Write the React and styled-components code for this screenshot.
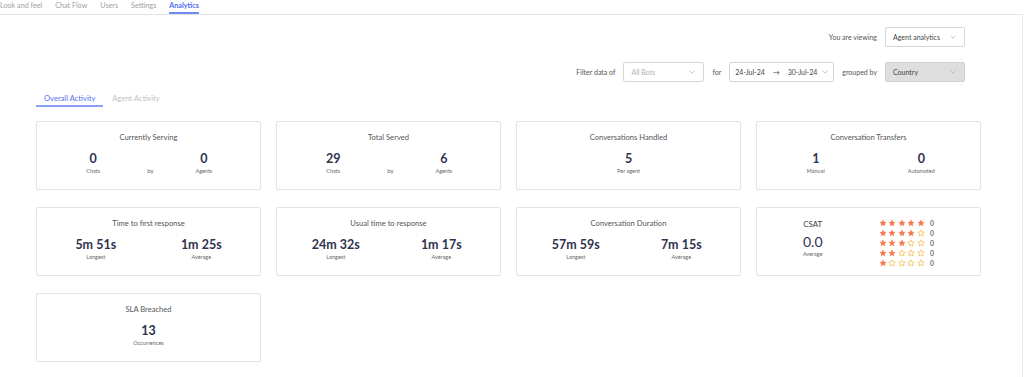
import React from 'react';
import styled, { createGlobalStyle } from 'styled-components';

const GlobalStyle = createGlobalStyle`
  body {
    margin: 0;
    background: #fff;
    font-family: Lato, "Open Sans", sans-serif;
    color: #444;
  }
`;

const Page = styled.div`
  width: 1024px;
  height: 377px;
  overflow: hidden;
`;

const TopTabs = styled.div`
  display: flex;
  gap: 13px;
  height: 14px;
  border-bottom: 1px solid #e3e3e3;
  margin-right: 1px;
`;

const TopTab = styled.div`
  font-size: 7.2px;
  line-height: 12px;
  height: 12px;
  white-space: nowrap;
  color: ${({ active }) => (active ? '#4f6bef' : '#a0a0a0')};
  font-weight: ${({ active }) => (active ? 700 : 400)};
  border-bottom: 2px solid ${({ active }) => (active ? '#6f8af5' : 'transparent')};
`;

const Content = styled.div`
  border-right: 1px solid #ececec;
  margin-right: 1px;
  height: 362px;
  padding: 12px 0 0 36px;
  box-sizing: border-box;
`;

const FilterRow = styled.div`
  display: flex;
  justify-content: flex-end;
  align-items: center;
  gap: 8px;
  padding-right: 57px;
  margin-bottom: ${({ mb }) => mb || 0}px;
`;

const Label = styled.span`
  font-size: 7px;
  color: #555;
  white-space: nowrap;
`;

const Select = styled.div`
  display: flex;
  align-items: center;
  justify-content: space-between;
  box-sizing: border-box;
  width: ${({ w }) => w}px;
  height: 20px;
  padding: 0 ${({ tight }) => (tight ? 5 : 8)}px 0 ${({ tight }) => (tight ? 5 : 7)}px;
  border: 1px solid ${({ grey }) => (grey ? '#cfcfcf' : '#d6d6d6')};
  border-radius: 2px;
  background: ${({ grey }) => (grey ? '#dedede' : '#fff')};
  font-size: 7px;
  white-space: nowrap;
  color: ${({ faded }) => (faded ? '#b0b0b0' : '#444')};
`;

const DateRange = styled.div`
  display: flex;
  align-items: center;
  gap: 8px;
  white-space: nowrap;
`;

const Chevron = () => (
  <svg width="6" height="4" viewBox="0 0 6 4" style={{ flexShrink: 0 }}>
    <path d="M0.5 0.8 L3 3.2 L5.5 0.8" fill="none" stroke="#aaa" strokeWidth="0.7" />
  </svg>
);

const SubTabs = styled.div`
  display: flex;
  margin-top: 11px;
  margin-bottom: 14px;
`;

const SubTab = styled.div`
  font-size: 7.6px;
  line-height: 11px;
  padding: 0 8px 1px;
  margin-right: 1px;
  white-space: nowrap;
  color: ${({ active }) => (active ? '#5470f0' : '#c2c2c2')};
  border-bottom: 2px solid ${({ active }) => (active ? '#8aa0f6' : 'transparent')};
`;

const Grid = styled.div`
  display: grid;
  grid-template-columns: repeat(4, 225px);
  grid-auto-rows: 69px;
  column-gap: 15px;
  row-gap: 17px;
`;

const Card = styled.div`
  box-sizing: border-box;
  border: 1px solid #e4e4e4;
  border-radius: 2px;
  background: #fff;
  box-shadow: 0 0 2px rgba(0, 0, 0, 0.04);
  padding: 10px 6px 0;
  display: flex;
  flex-direction: column;
  align-items: stretch;
`;

const CardTitle = styled.div`
  text-align: center;
  font-size: 7.6px;
  line-height: 10px;
  color: #555;
  margin-bottom: 10px;
`;

const Stats = styled.div`
  display: grid;
  grid-template-columns: ${({ cols }) => cols};
  align-items: start;
`;

const Stat = styled.div`
  display: flex;
  flex-direction: column;
  align-items: center;
`;

const Value = styled.div`
  font-size: 12.5px;
  line-height: 14px;
  font-weight: 700;
  color: #2f3350;
  white-space: nowrap;
`;

const Sub = styled.div`
  font-size: 5.5px;
  line-height: 8px;
  margin-top: 1px;
  color: #666;
`;

const By = styled.div`
  font-size: 6px;
  color: #666;
  padding-top: 15px;
  padding-left: 4px;
`;

const CsatBody = styled.div`
  display: grid;
  grid-template-columns: 1fr 1fr;
  padding-top: 1px;
`;

const CsatLeft = styled.div`
  display: flex;
  flex-direction: column;
  align-items: center;
  padding-right: 6px;
`;

const CsatTitle = styled.div`
  font-size: 8px;
  line-height: 10px;
  color: #444;
  margin-bottom: 5px;
`;

const CsatValue = styled.div`
  font-size: 14px;
  line-height: 15px;
  color: #2f3350;
`;

const Ratings = styled.div`
  display: flex;
  flex-direction: column;
  padding-left: 10px;
  margin-top: -1px;
`;

const RatingRow = styled.div`
  display: flex;
  align-items: center;
  height: 10px;
  gap: 1.5px;
`;

const Count = styled.span`
  font-size: 7px;
  font-weight: 700;
  color: #777;
  margin-left: 4px;
`;

const Star = ({ filled }) => (
  <svg width="8" height="8" viewBox="0 0 24 24">
    <path
      d="M12 2.5l2.9 6.3 6.8.7-5.1 4.6 1.5 6.8L12 17.4l-6.1 3.5 1.5-6.8-5.1-4.6 6.8-.7z"
      fill={filled ? '#f4774f' : 'none'}
      stroke={filled ? '#f4774f' : '#f2b431'}
      strokeWidth={filled ? 1 : 2}
      strokeLinejoin="round"
    />
  </svg>
);

const Pair = ({ a, b }) => (
  <Stats cols="1fr 1fr">
    <Stat>
      <Value>{a[0]}</Value>
      <Sub>{a[1]}</Sub>
    </Stat>
    <Stat>
      <Value>{b[0]}</Value>
      <Sub>{b[1]}</Sub>
    </Stat>
  </Stats>
);

const ByCard = ({ title, a, b }) => (
  <Card>
    <CardTitle>{title}</CardTitle>
    <Stats cols="1fr auto 1fr">
      <Stat>
        <Value>{a[0]}</Value>
        <Sub>{a[1]}</Sub>
      </Stat>
      <By>by</By>
      <Stat>
        <Value>{b[0]}</Value>
        <Sub>{b[1]}</Sub>
      </Stat>
    </Stats>
  </Card>
);

const SingleCard = ({ title, value, sub }) => (
  <Card>
    <CardTitle>{title}</CardTitle>
    <Stat>
      <Value>{value}</Value>
      <Sub>{sub}</Sub>
    </Stat>
  </Card>
);

const PairCard = ({ title, a, b }) => (
  <Card>
    <CardTitle>{title}</CardTitle>
    <Pair a={a} b={b} />
  </Card>
);

const App = () => {
  const tabs = ['Look and feel', 'Chat Flow', 'Users', 'Settings', 'Analytics'];
  return (
    <Page>
      <GlobalStyle />
      <TopTabs>
        {tabs.map((t) => (
          <TopTab key={t} active={t === 'Analytics'}>
            {t}
          </TopTab>
        ))}
      </TopTabs>
      <Content>
        <FilterRow mb={15}>
          <Label>You are viewing</Label>
          <Select w={80}>
            Agent analytics
            <Chevron />
          </Select>
        </FilterRow>
        <FilterRow>
          <Label>Filter data of</Label>
          <Select w={81} faded>
            All Bots
            <Chevron />
          </Select>
          <Label>for</Label>
          <Select w={105} tight>
            <DateRange>
              <span>24-Jul-24</span>
              <span>→</span>
              <span>30-Jul-24</span>
            </DateRange>
            <Chevron />
          </Select>
          <Label>grouped by</Label>
          <Select w={80} grey>
            Country
            <Chevron />
          </Select>
        </FilterRow>
        <SubTabs>
          <SubTab active>Overall Activity</SubTab>
          <SubTab>Agent Activity</SubTab>
        </SubTabs>
        <Grid>
          <ByCard title="Currently Serving" a={['0', 'Chats']} b={['0', 'Agents']} />
          <ByCard title="Total Served" a={['29', 'Chats']} b={['6', 'Agents']} />
          <SingleCard title="Conversations Handled" value="5" sub="Per agent" />
          <PairCard title="Conversation Transfers" a={['1', 'Manual']} b={['0', 'Automated']} />
          <PairCard title="Time to first response" a={['5m 51s', 'Longest']} b={['1m 25s', 'Average']} />
          <PairCard title="Usual time to response" a={['24m 32s', 'Longest']} b={['1m 17s', 'Average']} />
          <PairCard title="Conversation Duration" a={['57m 59s', 'Longest']} b={['7m 15s', 'Average']} />
          <Card>
            <CsatBody>
              <CsatLeft>
                <CsatTitle>CSAT</CsatTitle>
                <CsatValue>0.0</CsatValue>
                <Sub>Average</Sub>
              </CsatLeft>
              <Ratings>
                {[5, 4, 3, 2, 1].map((n) => (
                  <RatingRow key={n}>
                    {[1, 2, 3, 4, 5].map((i) => (
                      <Star key={i} filled={i <= n} />
                    ))}
                    <Count>0</Count>
                  </RatingRow>
                ))}
              </Ratings>
            </CsatBody>
          </Card>
          <SingleCard title="SLA Breached" value="13" sub="Occurrences" />
        </Grid>
      </Content>
    </Page>
  );
};

export default App;
